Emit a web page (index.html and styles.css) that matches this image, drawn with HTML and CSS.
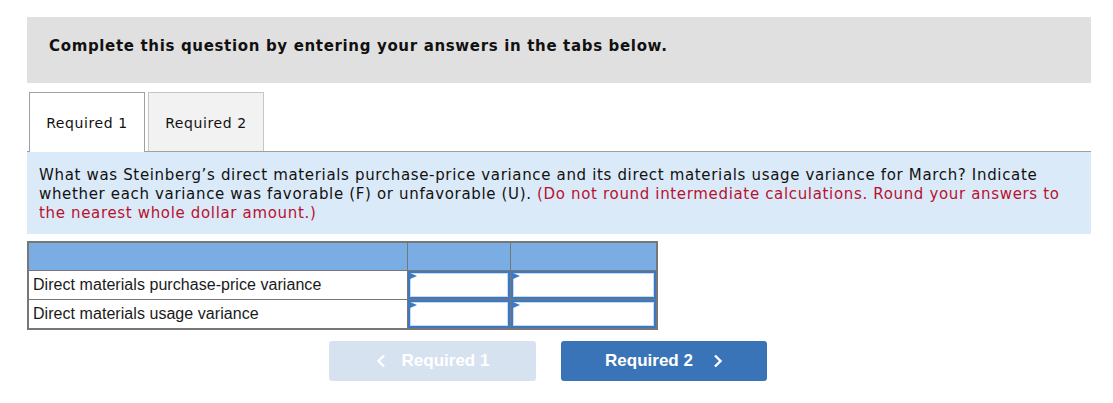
FILE: index.html
```html
<!DOCTYPE html>
<html>
<head>
<meta charset="utf-8">
<link rel="stylesheet" href="styles.css">
</head>
<body>
<div class="wrap">
  <div class="header">Complete this question by entering your answers in the tabs below.</div>
  <div class="tabs">
    <div class="tab active">Required 1</div>
    <div class="tab">Required 2</div>
  </div>
  <div class="question"><span>What was Steinberg’s direct materials purchase-price variance and its direct materials usage variance for March? Indicate</span> <span>whether each variance was favorable (F) or unfavorable (U).</span> <span class="note">(Do not round intermediate calculations. Round your answers to</span> <span class="note">the nearest whole dollar amount.)</span></div>
  <table class="grid">
    <tr class="head"><td class="c1"></td><td class="c2"></td><td class="c3"></td></tr>
    <tr><td class="label">Direct materials purchase-price variance</td><td class="inp"><div class="box"></div></td><td class="inp"><div class="box"></div></td></tr>
    <tr><td class="label">Direct materials usage variance</td><td class="inp"><div class="box"></div></td><td class="inp"><div class="box"></div></td></tr>
  </table>
  <div class="nav">
    <div class="btn prev"><svg class="chev" width="10" height="14" viewBox="0 0 10 14"><path d="M8 1.5 L2.5 7 L8 12.5" fill="none" stroke="#fff" stroke-width="2.4"/></svg><span>Required 1</span></div>
    <div class="btn next"><span>Required 2</span><svg class="chev" width="10" height="14" viewBox="0 0 10 14"><path d="M2 1.5 L7.5 7 L2 12.5" fill="none" stroke="#fff" stroke-width="2.4"/></svg></div>
  </div>
</div>
</body>
</html>
```

FILE: styles.css
```css
html, body { margin: 0; padding: 0; background: #fff; }
body { font-family: "DejaVu Sans", Verdana, sans-serif; color: #111; }
.wrap { padding: 17px 0 0 27px; width: 1064px; }
.header {
  background: #e0e0e0;
  height: 66px;
  box-sizing: border-box;
  padding: 19px 22px 0 22px;
  font-weight: bold;
  font-size: 15px;
  line-height: 20px;
  letter-spacing: 0.66px;
  color: #111;
}
.tabs {
  display: flex;
  gap: 3px;
  margin-top: 9px;
  padding-left: 2px;
  border-bottom: 1px solid #a0a0a0;
  height: 59px;
}
.tab {
  width: 116px;
  height: 59px;
  box-sizing: border-box;
  border: 1px solid #c6c6c6;
  border-bottom: none;
  background: #f2f2f2;
  font-size: 14px;
  line-height: 61px;
  letter-spacing: 0.6px;
  text-align: center;
  color: #111;
}
.tab.active {
  border-color: #a0a0a0;
  background: #fff;
  height: 60px;
}
.question {
  background: #dbeaf8;
  padding: 14px 12px 0 12px;
  font-size: 15px;
  line-height: 19px;
  letter-spacing: 0.66px;
  color: #111;
  height: 82px;
  box-sizing: border-box;
}
.note { color: #b8112f; }
.grid {
  margin-top: 7px;
  border-collapse: collapse;
  width: 631px;
  border: 2px solid #777;
  font-family: "Liberation Sans", Arial, sans-serif;
  font-size: 16px;
  letter-spacing: 0.05px;
}
.grid td { border: 1px solid #777; padding: 0; }
.head td { background: #7aade3; height: 27px; }
.c1 { width: 378px; }
.c2 { width: 102px; }
.label { height: 28px; padding-left: 4px !important; color: #1a1a1a; }
.inp { height: 28px; position: relative; }
.box {
  position: relative;
  height: 28px;
  box-sizing: border-box;
  border: 2px solid #3d78c0;
  box-shadow: inset 0 0 0 1px #c7dbf1;
  background: #fff;
}
.box::before {
  content: "";
  position: absolute;
  left: 0;
  top: 0;
  border-top: 3.5px solid transparent;
  border-bottom: 3.5px solid transparent;
  border-left: 7px solid #3d78c0;
}
.nav {
  display: flex;
  gap: 25px;
  margin-top: 11px;
  padding-left: 302px;
}
.btn {
  width: 207px;
  height: 40px;
  border-radius: 3px;
  display: flex;
  align-items: center;
  justify-content: center;
  gap: 16px;
  font-family: "Liberation Sans", Arial, sans-serif;
  font-weight: bold;
  font-size: 17px;
  color: #fff;
}
.prev { background: #d7e2f0; }
.next { background: #3a74b8; width: 206px; gap: 20px; }
.chev { display: block; }
```
